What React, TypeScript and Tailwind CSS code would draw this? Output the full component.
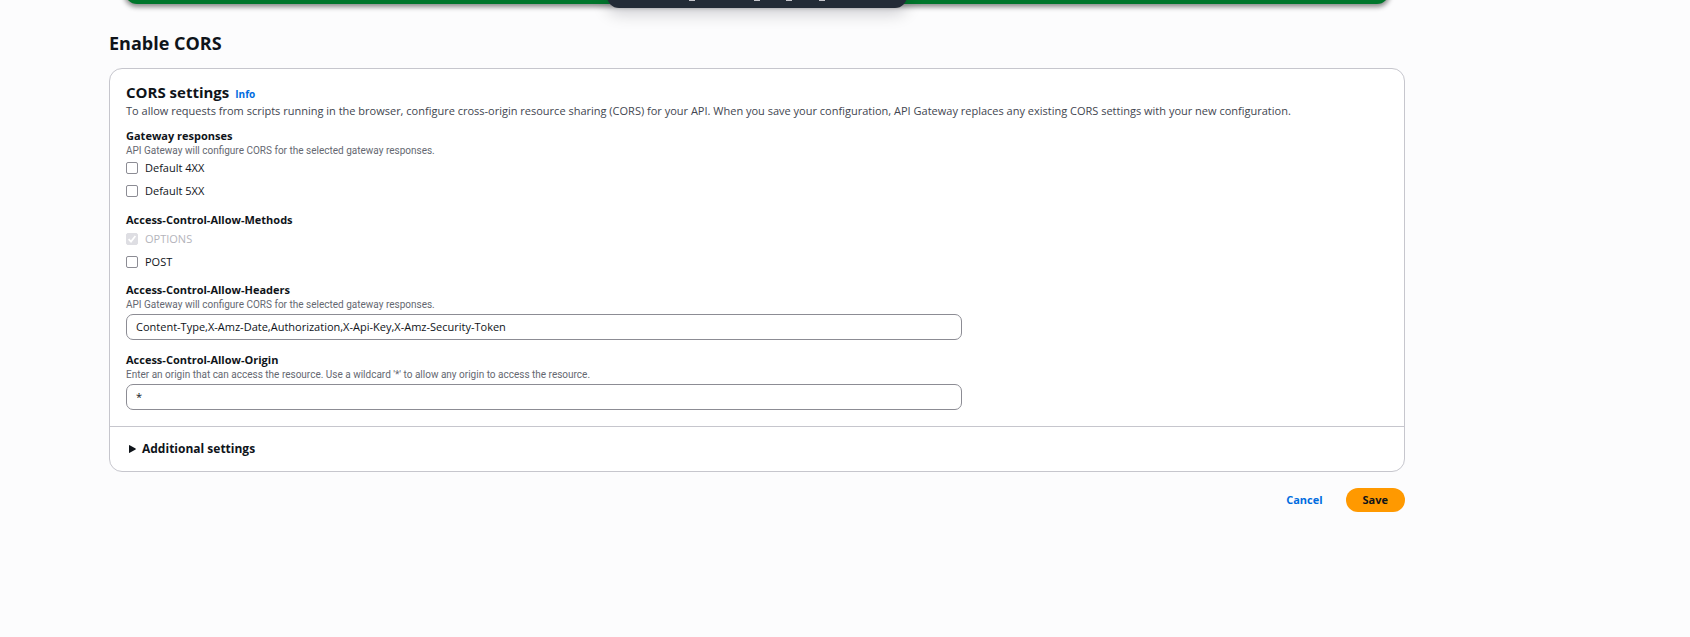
import { useState } from "react";
import type { InputHTMLAttributes, ReactNode } from "react";

function CheckRow({ label, ...rest }: { label: string } & InputHTMLAttributes<HTMLInputElement>) {
  return (
    <label className="flex w-fit items-center gap-[7px] text-[11px] leading-4 text-[#0f141a] has-disabled:text-[#b4b4bb]">
      <span className="relative flex">
        <input
          type="checkbox"
          className="peer size-[12px] appearance-none rounded-[2px] border border-[#8c8c94] bg-white checked:border-[#006ce0] checked:bg-[#006ce0] disabled:border-[#dedee3] disabled:bg-[#dedee3]"
          {...rest}
        />
        <svg
          viewBox="0 0 12 12"
          className="pointer-events-none absolute inset-0 hidden size-[12px] peer-checked:block"
          fill="none"
          stroke="white"
          strokeWidth="1.7"
          aria-hidden="true"
        >
          <path d="M2.6 6.2 5 8.6 9.4 3" />
        </svg>
      </span>
      {label}
    </label>
  );
}

function Legend({ children }: { children: ReactNode }) {
  return <legend className="text-[11px] leading-[14px] font-bold">{children}</legend>;
}

function Hint({ id, children }: { id?: string; children: ReactNode }) {
  return (
    <p id={id} className="font-[Roboto,sans-serif] text-[10px] leading-[15px] text-[#656871]">
      {children}
    </p>
  );
}

function TextField({ id, label, hint, value }: { id: string; label: string; hint: string; value: string }) {
  return (
    <div className="col-span-2">
      <label htmlFor={id} className="block text-[11px] leading-[14px] font-bold">
        {label}
      </label>
      <Hint id={`${id}-hint`}>{hint}</Hint>
      <input
        id={id}
        type="text"
        defaultValue={value}
        aria-describedby={`${id}-hint`}
        className="mt-[2px] block h-[26px] w-full rounded-[7px] border border-[#8c8c94] bg-white px-[9px] pb-[2px] text-[11px]"
      />
    </div>
  );
}

export default function App() {
  const [open, setOpen] = useState(false);
  return (
    <div className="min-h-screen overflow-hidden bg-[#fcfcfd] pr-[285px] pl-[109px] font-['Open_Sans','Noto_Sans',sans-serif] text-[#0f141a]">
      <div className="mx-4 -mt-9 flex h-10 justify-center rounded-[12px] bg-[#00762c] shadow-[0_2px_5px_1px_rgba(0,0,0,0.45)]">
        <div className="flex h-11 w-[300px] shrink-0 items-end justify-center rounded-[12px] bg-[#232b37] pb-[7px] shadow-[0_6px_16px_rgba(0,7,22,0.18)]">
          <div className="flex h-px w-[136px] justify-between">
            <span className="w-[6px] bg-[#c6c6cd]" />
            <span className="ml-[59px] w-[6px] bg-[#c6c6cd]" />
            <span className="ml-[26px] w-[6px] bg-[#c6c6cd]" />
            <span className="ml-[27px] w-[6px] bg-[#c6c6cd]" />
          </div>
        </div>
      </div>

      <main>
        <h1 className="pt-[27px] text-[18px] leading-6 font-bold">Enable CORS</h1>

        <form onSubmit={(e) => e.preventDefault()}>
          <section className="mt-[13px] rounded-[13px] border border-[#c6c6cd] bg-white">
            <div className="px-4 pt-[13px] pb-4">
              <div className="flex items-baseline gap-[6px]">
                <h2 className="text-[15px] leading-5 font-bold">CORS settings</h2>
                <a href="#info" className="text-[10px] leading-4 font-bold text-[#006ce0]">
                  Info
                </a>
              </div>
              <p className="mt-px text-[11px] leading-4 text-[#424650]">
                To allow requests from scripts running in the browser, configure cross-origin resource sharing (CORS)
                for your API. When you save your configuration, API Gateway replaces any existing CORS settings with
                your new configuration.
              </p>

              <fieldset className="mt-[10px]">
                <Legend>Gateway responses</Legend>
                <Hint>API Gateway will configure CORS for the selected gateway responses.</Hint>
                <div className="mt-[2px] flex flex-col gap-[7px]">
                  <CheckRow label="Default 4XX" />
                  <CheckRow label="Default 5XX" />
                </div>
              </fieldset>

              <fieldset className="mt-[14px]">
                <Legend>Access-Control-Allow-Methods</Legend>
                <div className="mt-1 flex flex-col gap-[7px]">
                  <CheckRow label="OPTIONS" defaultChecked disabled />
                  <CheckRow label="POST" />
                </div>
              </fieldset>

              <div className="mt-[13px] grid grid-cols-3 gap-x-4 gap-y-[13px]">
                <TextField
                  id="allow-headers"
                  label="Access-Control-Allow-Headers"
                  hint="API Gateway will configure CORS for the selected gateway responses."
                  value="Content-Type,X-Amz-Date,Authorization,X-Api-Key,X-Amz-Security-Token"
                />
                <TextField
                  id="allow-origin"
                  label="Access-Control-Allow-Origin"
                  hint="Enter an origin that can access the resource. Use a wildcard '*' to allow any origin to access the resource."
                  value="*"
                />
              </div>
            </div>

            <div className="border-t border-[#c6c6cd] px-4 py-3">
              <button
                type="button"
                aria-expanded={open}
                onClick={() => setOpen(!open)}
                className="flex items-center gap-[6px] pl-[3px] text-[12px] leading-5 font-bold"
              >
                <svg viewBox="0 0 7 8" className="h-[8px] w-[7px]" fill="currentColor" aria-hidden="true">
                  <path d="M0 .6Q0-.2.7.2L6.6 3.6Q7 4 6.6 4.4L.7 7.8Q0 8.2 0 7.4Z" />
                </svg>
                Additional settings
              </button>
            </div>
          </section>

          <div className="mt-4 flex justify-end gap-[6px]">
            <button type="button" className="h-6 px-[17px] text-[11px] font-bold text-[#006ce0]">
              Cancel
            </button>
            <button type="submit" className="h-6 rounded-full bg-[#ff9900] px-[17px] text-[11px] font-bold">
              Save
            </button>
          </div>
        </form>
      </main>
    </div>
  );
}
